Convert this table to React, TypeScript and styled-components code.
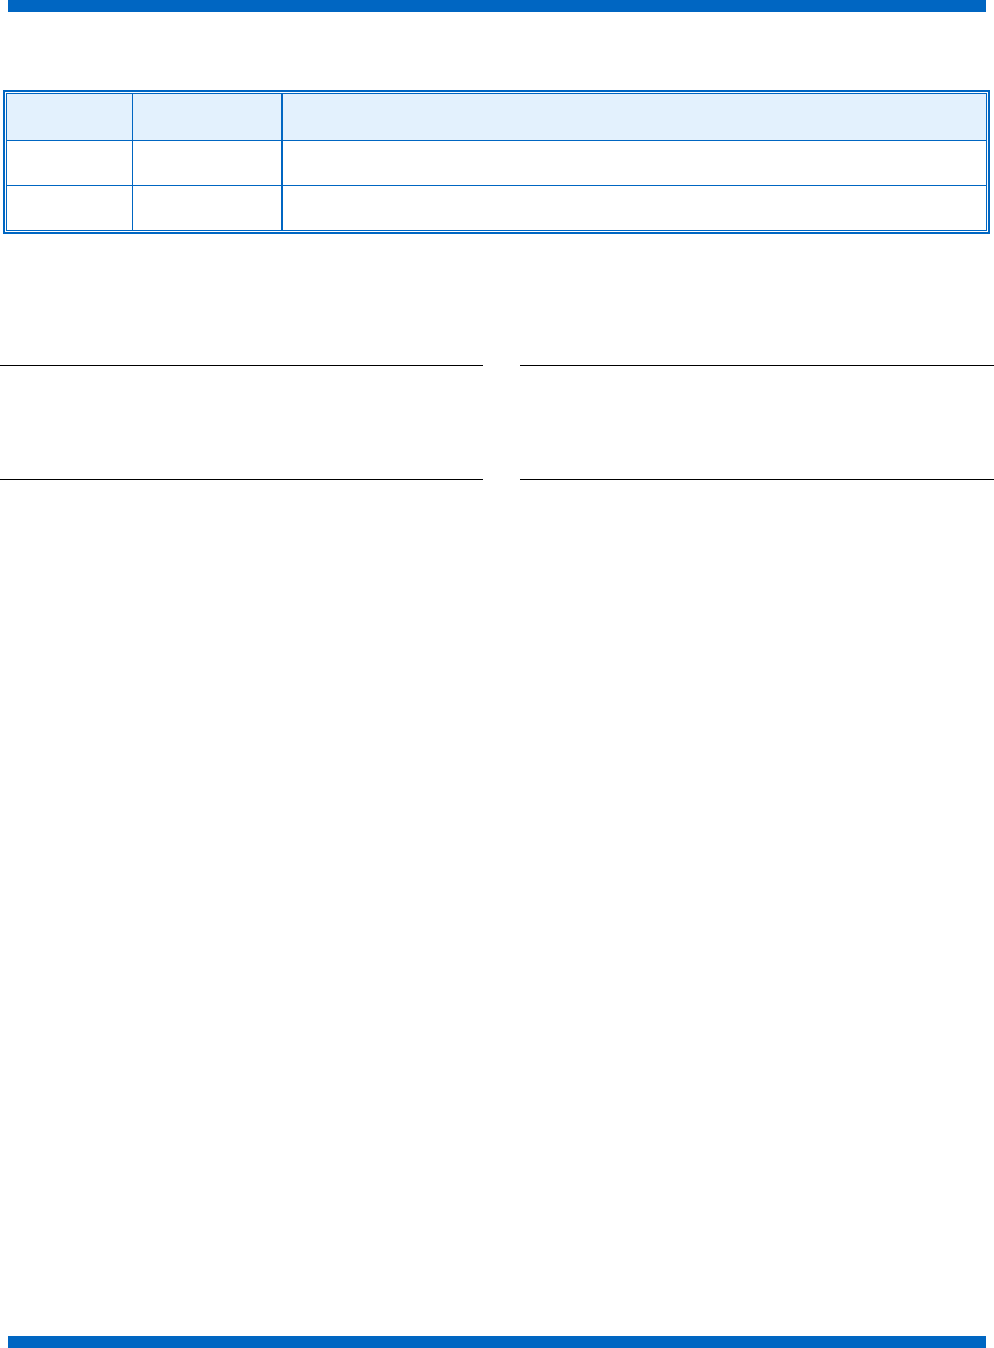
import React from "react";
import styled, { createGlobalStyle } from "styled-components";

const GlobalStyle = createGlobalStyle`
  html, body {
    margin: 0;
    padding: 0;
    background: #ffffff;
    font-family: "Liberation Sans", Arial, sans-serif;
  }
`;

const rows = [
  { head: true, cells: ["", "", ""] },
  { head: false, cells: ["", "", ""] },
  { head: false, cells: ["", "", ""] },
];

const App = () => {
  return (
    <Page>
      <GlobalStyle />
      <Bar />
      <TableFrame>
        <TableInner>
          {rows.map((row, i) => (
            <Row key={i} $head={row.head} $last={i === rows.length - 1} $height={i === 0 ? 46 : 44}>
              <Cell $w="126px" $rule={1}>{row.cells[0]}</Cell>
              <Cell $w="150px" $rule={2}>{row.cells[1]}</Cell>
              <Cell $w="auto" $rule={0}>{row.cells[2]}</Cell>
            </Row>
          ))}
        </TableInner>
      </TableFrame>
      <RuleBlock>
        <RuleColumn $w="483px" />
        <RuleColumn $w="474px" />
      </RuleBlock>
      <BottomBar />
    </Page>
  );
};

export default App;

const Page = styled.div`
  display: flex;
  flex-direction: column;
  width: 994px;
  min-height: 1348px;
`;

const Bar = styled.div`
  margin: 0 8px;
  height: 12px;
  background-color: #0066c2;
`;

const BottomBar = styled(Bar)`
  margin-top: auto;
`;

const TableFrame = styled.div`
  margin: 78px 4px 0 3px;
  padding: 1px;
  border: 2px solid #0066c2;
`;

const TableInner = styled.div`
  display: flex;
  flex-direction: column;
  border: 1px solid #0066c2;
`;

const Row = styled.div<{ $head: boolean; $last: boolean; $height: number }>`
  display: flex;
  height: ${(p) => p.$height}px;
  background-color: ${(p) => (p.$head ? "#e3f1fd" : "#ffffff")};
  border-bottom: ${(p) => (p.$last ? "none" : "1px solid #0066c2")};
`;

const Cell = styled.div<{ $w: string; $rule: number }>`
  flex: ${(p) => (p.$w === "auto" ? "1" : "none")};
  width: ${(p) => p.$w};
  box-sizing: border-box;
  border-right: ${(p) => (p.$rule ? `${p.$rule}px solid #0066c2` : "none")};
  font-size: 13px;
  color: #000000;
`;

const RuleBlock = styled.div`
  display: flex;
  justify-content: space-between;
  margin-top: 131px;
`;

const RuleColumn = styled.div<{ $w: string }>`
  width: ${(p) => p.$w};
  height: 113px;
  border-top: 1px solid #000000;
  border-bottom: 1px solid #000000;
`;
